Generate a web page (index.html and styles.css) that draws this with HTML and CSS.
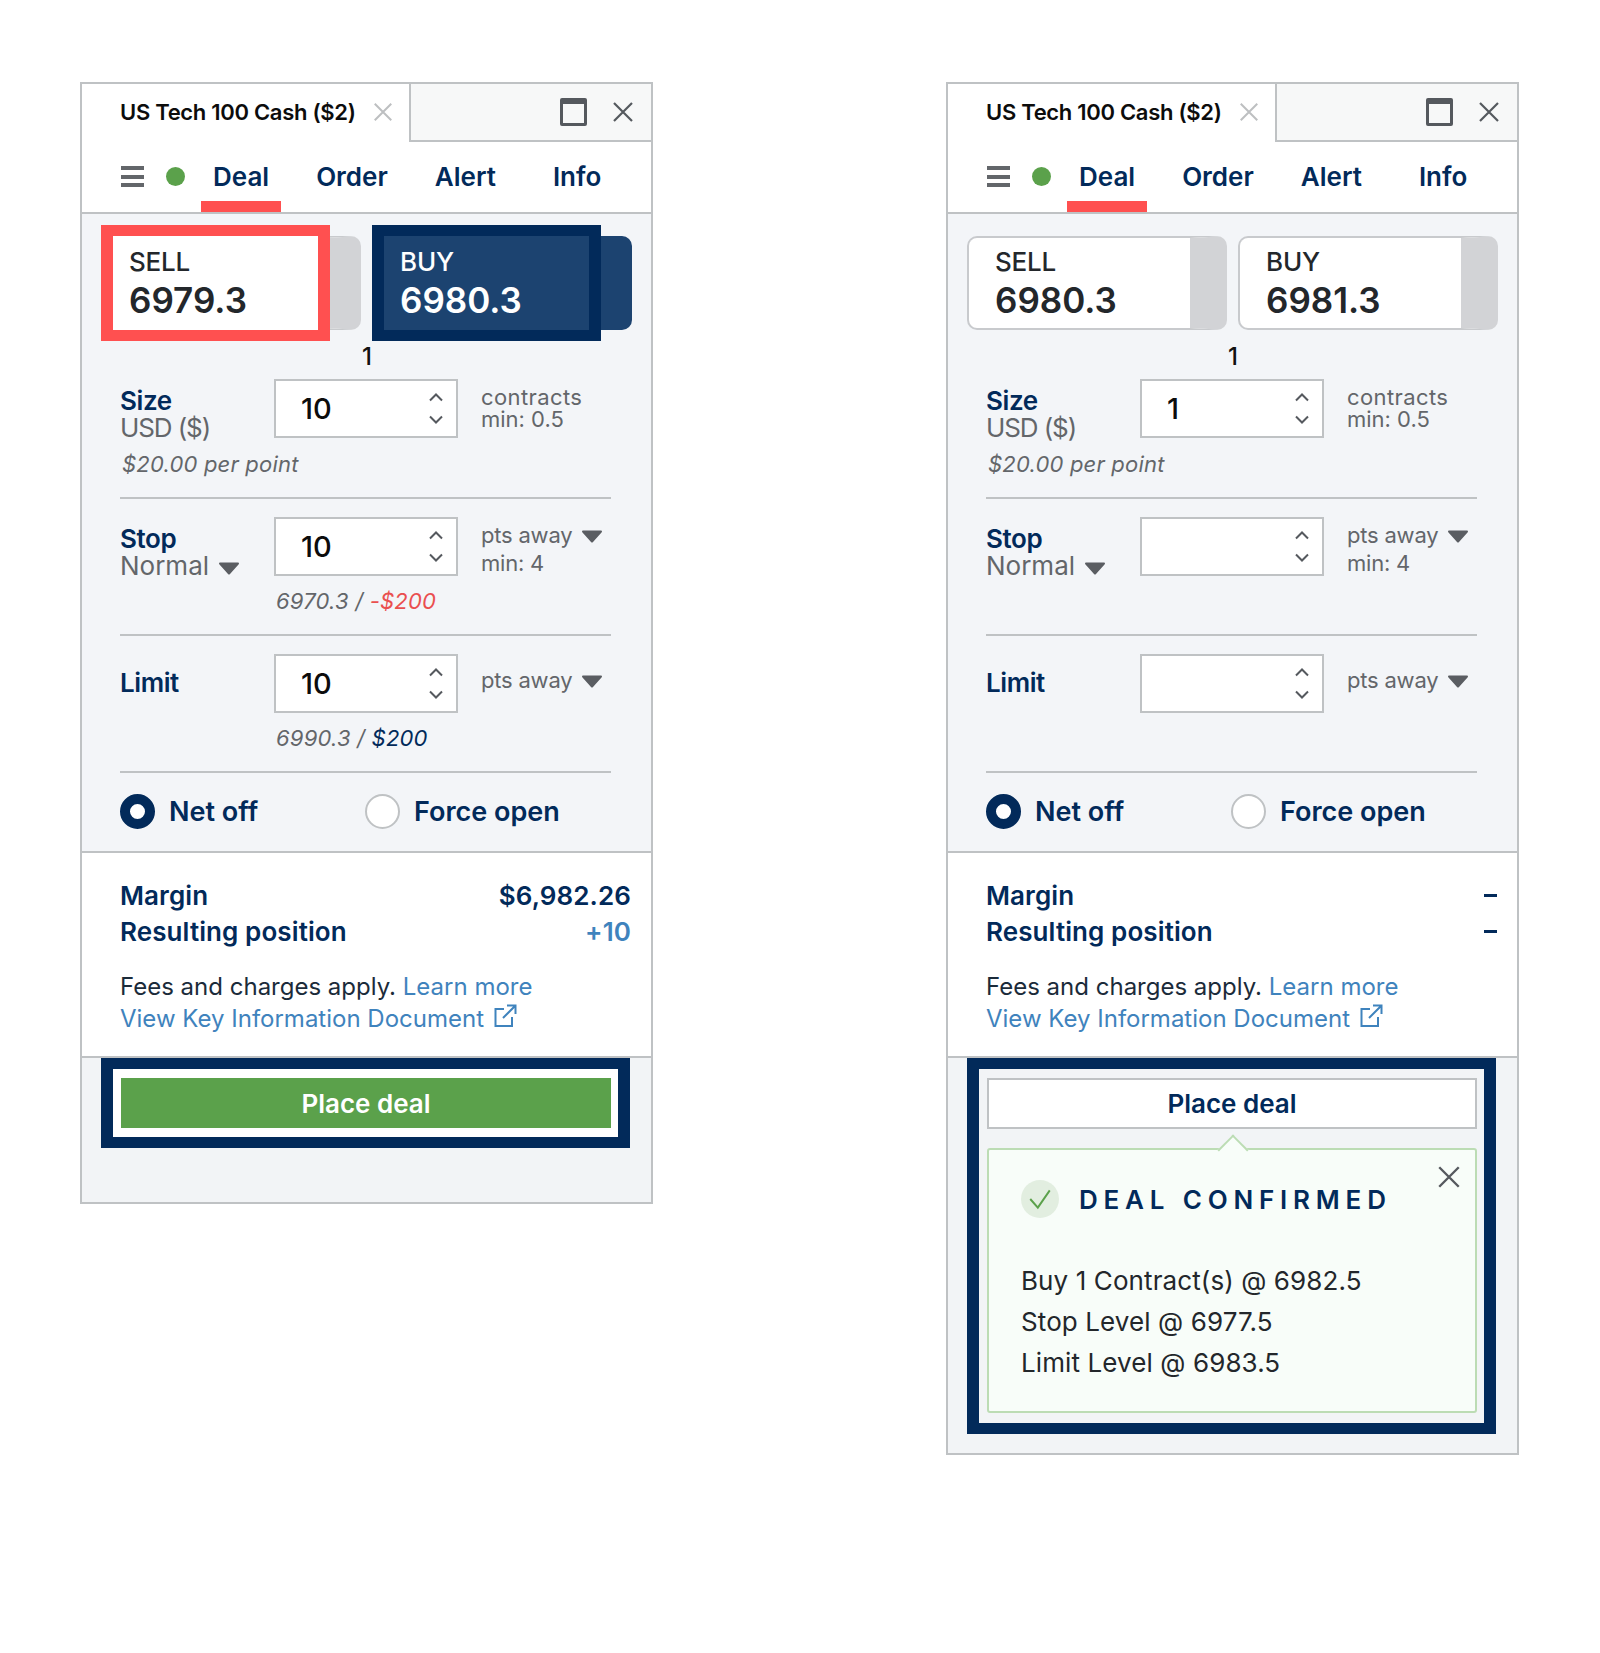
FILE: index.html
```html
<!DOCTYPE html>
<html lang="en">
<head>
    <meta charset="UTF-8">
    <meta name="viewport" content="width=device-width, initial-scale=1.0">
    <title>Deal ticket</title>
    <link rel="stylesheet" href="styles.css">
</head>
<body>
    <svg class="defs" width="0" height="0" aria-hidden="true">
        <symbol id="i-close" viewBox="0 0 24 24"><path d="M3 3L21 21M21 3L3 21" fill="none" stroke="currentColor" stroke-width="2.2"/></symbol>
        <symbol id="i-up" viewBox="0 0 16 10"><path d="M2 8L8 2L14 8" fill="none" stroke="currentColor" stroke-width="2"/></symbol>
        <symbol id="i-down" viewBox="0 0 16 10"><path d="M2 2L8 8L14 2" fill="none" stroke="currentColor" stroke-width="2"/></symbol>
        <symbol id="i-caret" viewBox="0 0 22 13"><path d="M1 1.5Q1 0.5 2 0.5H20Q21 0.5 21 1.5Q21 2 20.500 2.500L12 12Q11 13 10 12L1.500 2.500Q1 2 1 1.500Z" fill="currentColor"/></symbol>
        <symbol id="i-external" viewBox="0 0 24 24"><path d="M11 5H2.500V22H19V13M14 1.500H22.500V10M22.500 1.500L10 14" fill="none" stroke="currentColor" stroke-width="2"/></symbol>
    </svg>

    <main class="page">
        <!-- ticket with the highlighted controls -->
        <section class="ticket">
            <header class="titlebar">
                <div class="title-tab">
                    <span class="title-text">US Tech 100 Cash ($2)</span>
                    <svg class="tab-close"><use href="#i-close"/></svg>
                </div>
                <div class="title-rest">
                    <span class="maximize"></span>
                    <svg class="win-close"><use href="#i-close"/></svg>
                </div>
            </header>
            <nav class="nav">
                <span class="hamburger"><i></i><i></i><i></i></span>
                <span class="live-dot"></span>
                <a class="tab active">Deal</a>
                <a class="tab">Order</a>
                <a class="tab">Alert</a>
                <a class="tab tab-info">Info</a>
            </nav>
            <div class="form">
                <div class="prices">
                    <div class="price">
                        <div class="price-label">SELL</div>
                        <div class="price-value">6979.3</div>
                        <span class="ring ring-red"></span>
                    </div>
                    <div class="price price-selected">
                        <div class="price-label">BUY</div>
                        <div class="price-value">6980.3</div>
                        <span class="ring ring-navy"></span>
                    </div>
                </div>
                <div class="spread">1</div>

                <div class="row row-first">
                    <div class="row-label"><strong>Size</strong><span class="row-unit">USD ($)</span></div>
                    <div class="stepper">
                        <span class="stepper-value">10</span>
                        <span class="chevrons"><svg><use href="#i-up"/></svg><svg><use href="#i-down"/></svg></span>
                    </div>
                    <div class="row-aside row-aside-tight"><span>contracts</span><span>min: 0.5</span></div>
                    <div class="hint hint-wide">$20.00 per point</div>
                </div>
                <div class="row">
                    <div class="row-label"><strong>Stop</strong><span>Normal <svg class="caret"><use href="#i-caret"/></svg></span></div>
                    <div class="stepper">
                        <span class="stepper-value">10</span>
                        <span class="chevrons"><svg><use href="#i-up"/></svg><svg><use href="#i-down"/></svg></span>
                    </div>
                    <div class="row-aside"><span>pts away <svg class="caret"><use href="#i-caret"/></svg></span><span>min: 4</span></div>
                    <div class="hint">6970.3 / <em class="loss">-$200</em></div>
                </div>
                <div class="row">
                    <div class="row-label row-label-single"><strong>Limit</strong></div>
                    <div class="stepper">
                        <span class="stepper-value">10</span>
                        <span class="chevrons"><svg><use href="#i-up"/></svg><svg><use href="#i-down"/></svg></span>
                    </div>
                    <div class="row-aside row-aside-single"><span>pts away <svg class="caret"><use href="#i-caret"/></svg></span></div>
                    <div class="hint">6990.3 / <em class="gain">$200</em></div>
                </div>
                <div class="radios">
                    <label class="radio checked"><i></i>Net off</label>
                    <label class="radio"><i></i>Force open</label>
                </div>
            </div>
            <div class="summary">
                <div class="summary-line"><span>Margin</span><span>$6,982.26</span></div>
                <div class="summary-line"><span>Resulting position</span><span class="positive">+10</span></div>
                <p class="fees">Fees and charges apply. <a>Learn more</a></p>
                <p class="fees"><a>View Key Information Document <svg class="external"><use href="#i-external"/></svg></a></p>
            </div>
            <div class="actions actions-short">
                <div class="action-frame action-frame-filled">
                    <button class="place-deal">Place deal</button>
                </div>
            </div>
        </section>

        <!-- same ticket after the deal went through -->
        <section class="ticket">
            <header class="titlebar">
                <div class="title-tab">
                    <span class="title-text">US Tech 100 Cash ($2)</span>
                    <svg class="tab-close"><use href="#i-close"/></svg>
                </div>
                <div class="title-rest">
                    <span class="maximize"></span>
                    <svg class="win-close"><use href="#i-close"/></svg>
                </div>
            </header>
            <nav class="nav">
                <span class="hamburger"><i></i><i></i><i></i></span>
                <span class="live-dot"></span>
                <a class="tab active">Deal</a>
                <a class="tab">Order</a>
                <a class="tab">Alert</a>
                <a class="tab tab-info">Info</a>
            </nav>
            <div class="form">
                <div class="prices">
                    <div class="price">
                        <div class="price-label">SELL</div>
                        <div class="price-value">6980.3</div>
                    </div>
                    <div class="price">
                        <div class="price-label">BUY</div>
                        <div class="price-value">6981.3</div>
                    </div>
                </div>
                <div class="spread">1</div>

                <div class="row row-first">
                    <div class="row-label"><strong>Size</strong><span class="row-unit">USD ($)</span></div>
                    <div class="stepper">
                        <span class="stepper-value">1</span>
                        <span class="chevrons"><svg><use href="#i-up"/></svg><svg><use href="#i-down"/></svg></span>
                    </div>
                    <div class="row-aside row-aside-tight"><span>contracts</span><span>min: 0.5</span></div>
                    <div class="hint hint-wide">$20.00 per point</div>
                </div>
                <div class="row">
                    <div class="row-label"><strong>Stop</strong><span>Normal <svg class="caret"><use href="#i-caret"/></svg></span></div>
                    <div class="stepper">
                        <span class="stepper-value"></span>
                        <span class="chevrons"><svg><use href="#i-up"/></svg><svg><use href="#i-down"/></svg></span>
                    </div>
                    <div class="row-aside"><span>pts away <svg class="caret"><use href="#i-caret"/></svg></span><span>min: 4</span></div>
                </div>
                <div class="row">
                    <div class="row-label row-label-single"><strong>Limit</strong></div>
                    <div class="stepper">
                        <span class="stepper-value"></span>
                        <span class="chevrons"><svg><use href="#i-up"/></svg><svg><use href="#i-down"/></svg></span>
                    </div>
                    <div class="row-aside row-aside-single"><span>pts away <svg class="caret"><use href="#i-caret"/></svg></span></div>
                </div>
                <div class="radios">
                    <label class="radio checked"><i></i>Net off</label>
                    <label class="radio"><i></i>Force open</label>
                </div>
            </div>
            <div class="summary">
                <div class="summary-line"><span>Margin</span><span class="dash"></span></div>
                <div class="summary-line"><span>Resulting position</span><span class="dash"></span></div>
                <p class="fees">Fees and charges apply. <a>Learn more</a></p>
                <p class="fees"><a>View Key Information Document <svg class="external"><use href="#i-external"/></svg></a></p>
            </div>
            <div class="actions">
                <div class="action-frame">
                    <button class="place-deal place-deal-done">Place deal</button>
                    <div class="confirm">
                        <svg class="confirm-close"><use href="#i-close"/></svg>
                        <div class="confirm-head">
                            <span class="confirm-check">
                                <svg viewBox="0 0 24 24"><path d="M3 12L10 20L21 4" fill="none" stroke="#5ba14b" stroke-width="1.800"/></svg>
                            </span>
                            <span class="confirm-title">DEAL CONFIRMED</span>
                        </div>
                        <p>Buy 1 Contract(s) @ 6982.5</p>
                        <p>Stop Level @ 6977.5</p>
                        <p>Limit Level @ 6983.5</p>
                    </div>
                </div>
            </div>
        </section>
    </main>
</body>
</html>
```

FILE: styles.css
```css
* {
    box-sizing: border-box;
}
body {
    margin: 0;
    background-color: #fff;
    font-family: Inter, "Noto Sans", sans-serif;
    color: #022a5a;
}
.defs {
    position: absolute;
}
.page {
    display: flex;
    gap: 293px;
    align-items: flex-start;
    padding: 82px 0 0 80px;
}
.ticket {
    width: 573px;
    border: 2px solid #bfc2c4;
    background-color: #f3f5f8;
}

/* title bar */
.titlebar {
    display: flex;
    height: 58px;
    background-color: #fff;
}
.title-tab {
    width: 327px;
    display: flex;
    align-items: center;
    padding: 0 0 3px 38px;
}
.title-text {
    font-size: 22px;
    font-weight: 600;
    letter-spacing: -0.3px;
    color: #0c0c0c;
    white-space: nowrap;
}
.tab-close {
    width: 22px;
    height: 22px;
    margin-left: auto;
    margin-right: 15px;
    color: #bdbfc1;
}
.title-rest {
    flex: 1;
    display: flex;
    align-items: center;
    justify-content: flex-end;
    gap: 24px;
    padding-right: 16px;
    background-color: #f7f8f8;
    border-left: 2px solid #bfc2c4;
    border-bottom: 2px solid #bfc2c4;
}
.maximize {
    width: 27px;
    height: 28px;
    border: 3px solid #55595e;
    border-top-width: 6px;
    border-radius: 2px;
}
.win-close {
    width: 24px;
    height: 24px;
    color: #55595e;
}

/* nav */
.nav {
    display: flex;
    align-items: stretch;
    height: 72px;
    padding-left: 39px;
    background-color: #fff;
    border-bottom: 2px solid #bfc2c4;
}
.hamburger {
    width: 23px;
    display: flex;
    flex-direction: column;
    justify-content: space-between;
    height: 21px;
    margin-top: 24px;
}
.hamburger i {
    height: 4px;
    background-color: #63666a;
}
.live-dot {
    width: 19px;
    height: 19px;
    margin: 25px 0 0 22px;
    border-radius: 50%;
    background-color: #5ba14b;
}
.tab {
    height: 70px;
    padding: 19px 12px 0;
    margin-left: 23px;
    font-size: 26px;
    font-weight: 600;
    line-height: 32px;
}
.tab.active {
    margin-left: 16px;
    border-bottom: 11px solid #ff5050;
}
.tab-info {
    margin-left: 33px;
}

/* form */
.form {
    padding: 22px 40px 0 38px;
}
.prices {
    display: flex;
    gap: 11px;
    margin: 0 -21px 0 -19px;
}
.price {
    position: relative;
    width: 260px;
    height: 94px;
    padding: 8px 0 0 26px;
    border: 2px solid #c8cacd;
    border-right: 37px solid #d2d3d6;
    border-radius: 10px;
    background-color: #fff;
    color: #23272b;
}
.price-label {
    font-size: 26px;
    font-weight: 500;
    line-height: 32px;
    letter-spacing: -0.2px;
}
.price-value {
    margin-top: 3px;
    font-size: 35px;
    font-weight: 600;
    line-height: 38px;
}
.price-selected {
    background-color: #1c4370;
    border-color: #1c4370;
    color: #fff;
}
/* highlight boxes drawn over the price buttons */
.ring {
    position: absolute;
    top: -13px;
    bottom: -13px;
    left: -2px;
    right: -6px;
    border-style: solid;
    border-width: 11px 12px;
}
.ring-red {
    border-color: #ff5050;
    box-shadow: inset 0 0 0 2px #fff;
}
.ring-navy {
    border-color: #022a5a;
}
.spread {
    height: 49px;
    padding: 12px 0 0 242px;
    font-size: 24px;
    font-weight: 500;
    line-height: 30px;
    color: #111;
}

.row {
    display: grid;
    grid-template-columns: 154px 184px 1fr;
    align-content: start;
    height: 137px;
    padding-top: 18px;
    border-top: 2px solid #bfc2c4;
}
.row-first {
    height: 118px;
    padding-top: 0;
    border-top: 0;
}
.row-label {
    display: flex;
    flex-direction: column;
    padding-top: 8px;
    font-size: 26px;
    line-height: 27px;
    color: #63666a;
}
.row-label strong {
    font-size: 26px;
    font-weight: 600;
    letter-spacing: -0.4px;
    color: #022a5a;
}
.row-unit {
    letter-spacing: -1.1px;
}
.row-label-single {
    padding-top: 15px;
}
.stepper {
    height: 59px;
    display: flex;
    align-items: center;
    justify-content: space-between;
    padding: 0 12px 0 25px;
    border: 2px solid #bfc2c4;
    background-color: #fff;
    font-size: 29px;
    font-weight: 500;
    color: #0c0c0c;
}
.chevrons {
    display: flex;
    flex-direction: column;
    gap: 11px;
    color: #55595e;
}
.chevrons svg {
    display: block;
    width: 16px;
    height: 11px;
}
.row-aside {
    display: flex;
    flex-direction: column;
    gap: 2px;
    padding: 5px 0 0 23px;
    font-size: 22px;
    letter-spacing: -0.2px;
    line-height: 26px;
    color: #63666a;
}
.row-aside-tight {
    gap: 0;
    line-height: 22px;
    letter-spacing: 0;
    padding-top: 7px;
}
.row-aside-tight span:first-child {
    letter-spacing: 0.4px;
}
.row-aside-single {
    padding-top: 13px;
}
.caret {
    width: 22px;
    height: 13px;
    margin-left: 3px;
    color: #5a5d62;
}
.row-label .caret {
    margin-left: 2px;
}
.hint {
    grid-column: 2 / 4;
    margin-top: 9px;
    padding-left: 2px;
    font-size: 22px;
    font-style: italic;
    letter-spacing: 0.2px;
    line-height: 26px;
    color: #63666a;
}
.hint-wide {
    grid-column: 1 / 4;
    margin-top: 10px;
}
.row-aside-single + .hint {
    margin-top: 12px;
}
.hint em.loss {
    color: #ea4f4f;
}
.hint em.gain {
    color: #022a5a;
}
.radios {
    display: grid;
    grid-template-columns: 245px 1fr;
    height: 80px;
    padding-top: 20px;
    border-top: 2px solid #bfc2c4;
}
.radio {
    display: flex;
    align-items: center;
    gap: 14px;
    height: 36px;
    font-size: 27px;
    font-weight: 600;
}
.radio i {
    width: 35px;
    height: 35px;
    border: 2px solid #bfc2c4;
    border-radius: 50%;
    background-color: #fff;
}
.radio.checked i {
    border: 10px solid #022a5a;
}

/* summary */
.summary {
    height: 207px;
    padding: 24px 20px 0 38px;
    background-color: #fff;
    border-top: 2px solid #bfc2c4;
    border-bottom: 2px solid #bfc2c4;
}
.summary-line {
    display: flex;
    justify-content: space-between;
    align-items: center;
    height: 36px;
    font-size: 26px;
    font-weight: 600;
    letter-spacing: 0.1px;
}
.positive {
    color: #3f83bd;
}
.dash {
    width: 13px;
    height: 3px;
    background-color: #022a5a;
}
.fees {
    margin: 0;
    font-size: 24px;
    line-height: 32px;
    color: #1b2b3a;
}
.summary-line + .fees {
    margin-top: 22px;
}
.fees a {
    color: #3f83bd;
}
.external {
    width: 24px;
    height: 24px;
    margin-left: 2px;
    vertical-align: -1px;
}

/* bottom action area */
.actions {
    padding: 0 21px 19px 19px;
    background-color: #f2f4f6;
}
.actions-short {
    padding-bottom: 54px;
}
.action-frame {
    padding: 9px 7px 10px 8px;
    border-style: solid;
    border-color: #022a5a;
    border-width: 11px 12px;
}
.action-frame-filled {
    padding-bottom: 9px;
    background-color: #fff;
}
.place-deal {
    display: block;
    width: 100%;
    height: 50px;
    border: 0;
    background-color: #5ba14b;
    color: #fff;
    font-family: inherit;
    font-size: 26px;
    font-weight: 600;
}
.place-deal-done {
    height: 51px;
    background-color: #fff;
    border: 2px solid #bfc2c4;
    color: #022a5a;
}
.confirm {
    position: relative;
    height: 265px;
    margin-top: 19px;
    padding: 30px 35px 0 32px;
    border: 2px solid #bcdcb4;
    border-radius: 3px;
    background-color: #f8fdf9;
    color: #23272b;
}
/* little arrow pointing up at the button */
.confirm::before {
    content: "";
    position: absolute;
    top: -11px;
    left: 50%;
    width: 20px;
    height: 20px;
    margin-left: -10px;
    border-top: 2px solid #bcdcb4;
    border-left: 2px solid #bcdcb4;
    background-color: #f8fdf9;
    transform: rotate(45deg);
}
.confirm-close {
    position: absolute;
    top: 14px;
    right: 13px;
    width: 26px;
    height: 26px;
    color: #55595e;
}
.confirm-head {
    display: flex;
    align-items: center;
    gap: 20px;
    height: 38px;
    margin-bottom: 42px;
}
.confirm-check {
    width: 38px;
    height: 38px;
    padding: 6px;
    border-radius: 50%;
    background-color: #e2eee0;
}
.confirm-check svg {
    display: block;
    width: 26px;
    height: 26px;
}
.confirm-title {
    font-size: 26px;
    font-weight: 600;
    letter-spacing: 5.8px;
    color: #022a5a;
}
.confirm p {
    margin: 0;
    font-size: 26px;
    line-height: 41px;
    letter-spacing: 0.1px;
}
```
